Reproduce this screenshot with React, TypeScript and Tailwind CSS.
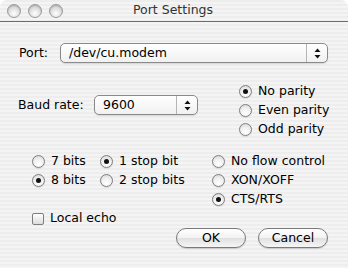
const stripes =
  "bg-[repeating-linear-gradient(180deg,#ededed_0px,#ededed_2px,#f4f4f4_2px,#f4f4f4_4px)]";

function Light() {
  return (
    <span className="w-[14px] h-[14px] rounded-full border border-[#9a9a9a] bg-[radial-gradient(circle_at_50%_70%,#ffffff_0%,#e2e2e2_45%,#bdbdbd_100%)] shadow-[inset_0_1px_1px_rgba(0,0,0,0.15)]" />
  );
}

function Arrows() {
  return (
    <svg width="7" height="11" viewBox="0 0 7 11">
      <path d="M3.5 0.5 L6.5 4 L0.5 4 Z" fill="#111" />
      <path d="M3.5 10.5 L6.5 7 L0.5 7 Z" fill="#111" />
    </svg>
  );
}

function Popup({ value, width }: { value: string; width: string }) {
  return (
    <div
      className={`${width} h-[20px] flex rounded-[5px] border border-[#8a8a8a] bg-[linear-gradient(180deg,#ffffff,#f1f1f1)] shadow-[0_1px_1px_rgba(0,0,0,0.12)]`}
    >
      <span className="flex-1 pl-[8px] leading-[18px]">{value}</span>
      <span className="w-[21px] flex items-center justify-center border-l border-[#b5b5b5]">
        <Arrows />
      </span>
    </div>
  );
}

function Radio({ label, on }: { label: string; on?: boolean }) {
  return (
    <div className="h-[19px] flex items-center gap-[6px]">
      <span className="w-[13px] h-[13px] rounded-full border border-[#7e7e7e] bg-[radial-gradient(circle_at_50%_75%,#ffffff_0%,#f0f0f0_50%,#d2d2d2_100%)] flex items-center justify-center shadow-[0_1px_1px_rgba(0,0,0,0.1)]">
        {on && <span className="w-[5px] h-[5px] rounded-full bg-[#111]" />}
      </span>
      <span>{label}</span>
    </div>
  );
}

function Button({ label }: { label: string }) {
  return (
    <button className="w-[70px] h-[20px] rounded-full border border-[#7a7a7a] bg-[linear-gradient(180deg,#ffffff_0%,#f2f2f2_50%,#e0e0e0_51%,#f6f6f6_100%)] shadow-[0_1px_1px_rgba(0,0,0,0.15)] leading-[18px] text-center">
      {label}
    </button>
  );
}

export default function App() {
  return (
    <div
      className={`w-[348px] h-[268px] rounded-t-[7px] overflow-hidden ${stripes} text-[12.5px] text-black font-['DejaVu_Sans',sans-serif]`}
    >
      <div className="h-[22px] relative flex items-center pl-[7px] gap-[7px] border-b border-[#6b6b6b]">
        <Light />
        <Light />
        <Light />
        <span className="absolute left-0 right-0 text-center text-[#333] pr-[2px]">Port Settings</span>
      </div>

      <div className="flex items-center mt-[21px]">
        <span className="w-[60px] pl-[19px]">Port:</span>
        <Popup value="/dev/cu.modem" width="w-[268px]" />
      </div>

      <div className="flex mt-[19px]">
        <div className="flex items-center mt-[13px] self-start">
          <span className="w-[94px] pl-[18px]">Baud rate:</span>
          <Popup value="9600" width="w-[104px]" />
        </div>
        <div className="ml-[41px] flex flex-col">
          <Radio label="No parity" on />
          <Radio label="Even parity" />
          <Radio label="Odd parity" />
        </div>
      </div>

      <div className="flex mt-[13px] pl-[32px]">
        <div className="w-[68px] flex flex-col">
          <Radio label="7 bits" />
          <Radio label="8 bits" on />
        </div>
        <div className="w-[112px] flex flex-col">
          <Radio label="1 stop bit" on />
          <Radio label="2 stop bits" />
        </div>
        <div className="flex flex-col">
          <Radio label="No flow control" />
          <Radio label="XON/XOFF" />
          <Radio label="CTS/RTS" on />
        </div>
      </div>

      <div className="h-[19px] flex items-center gap-[6px] pl-[32px]">
        <span className="w-[12px] h-[12px] rounded-[2px] border border-[#7e7e7e] bg-[linear-gradient(180deg,#ffffff,#dcdcdc)]" />
        <span>Local echo</span>
      </div>

      <div className="flex justify-end gap-[12px] pr-[20px] mt-0">
        <Button label="OK" />
        <Button label="Cancel" />
      </div>
    </div>
  );
}
